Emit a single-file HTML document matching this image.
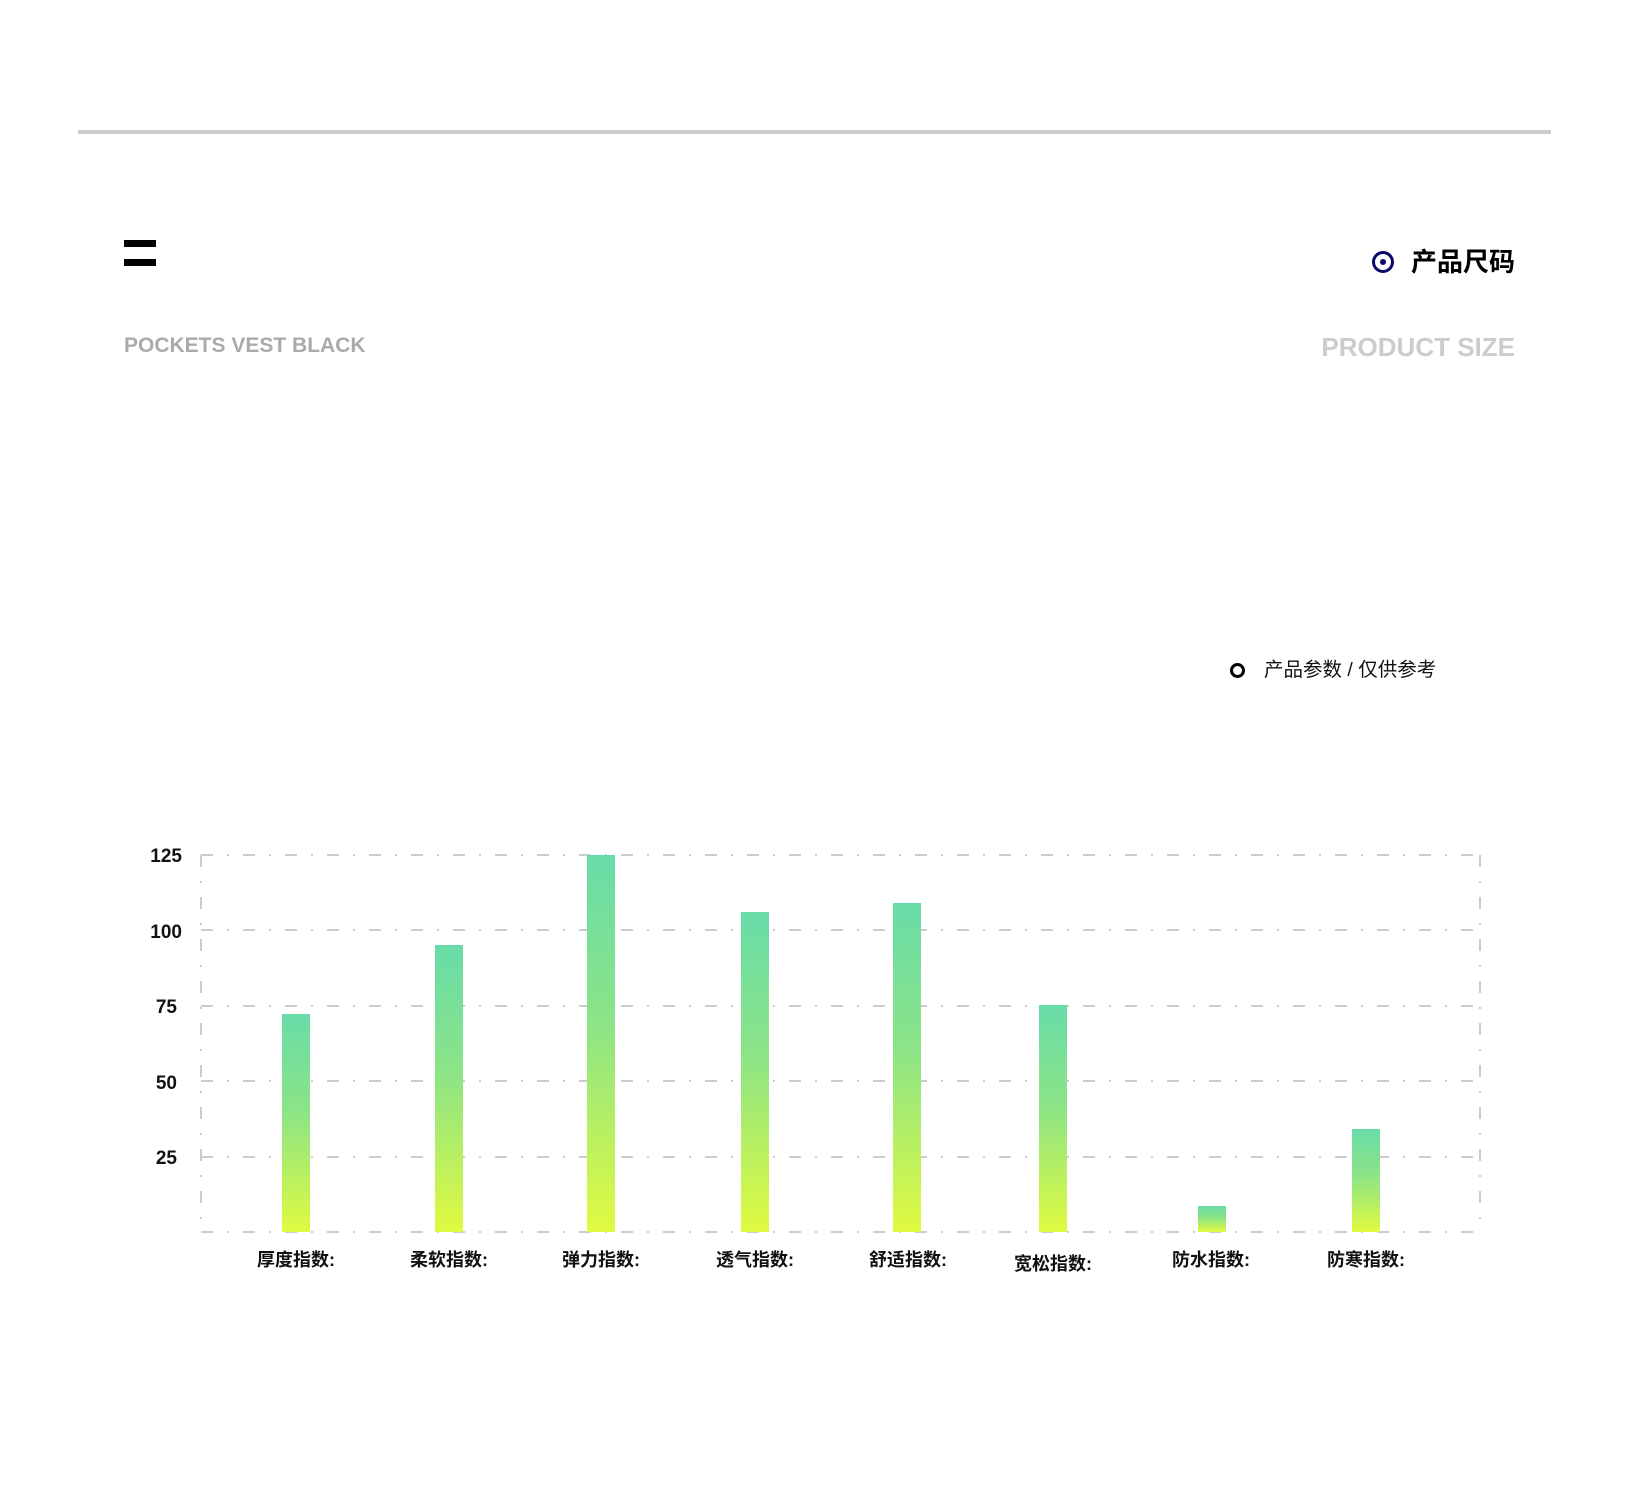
<!DOCTYPE html>
<html><head><meta charset="utf-8"><style>
body{margin:0;width:1629px;height:1500px;background:#fff;position:relative;overflow:hidden;font-family:"Liberation Sans","Noto Sans CJK SC",sans-serif}
.a{position:absolute}
</style></head><body>
<div class="a" style="left:78px;top:130px;width:1473px;height:4px;background:#ccc"></div>
<div class="a" style="left:124px;top:240px;width:32px;height:7px;background:#000"></div>
<div class="a" style="left:124px;top:259px;width:32px;height:7px;background:#000"></div>
<div class="a" style="left:1372px;top:251px;width:16px;height:16px;border:3px solid #0a0a6a;border-radius:50%"></div>
<div class="a" style="left:1380px;top:259px;width:6px;height:6px;background:#0a0a6a;border-radius:50%"></div>
<div class="a" style="right:114px;top:245px;font-size:26px;font-weight:bold;line-height:34px;color:#000">产品尺码</div>
<div class="a" style="left:124px;top:334px;font-size:21px;font-weight:bold;color:#aaa;line-height:24px">POCKETS VEST BLACK</div>
<div class="a" style="right:114px;top:332px;font-size:26px;font-weight:bold;color:#ccc;line-height:30px">PRODUCT SIZE</div>
<div class="a" style="left:1230px;top:663px;width:9px;height:9px;border:3px solid #000;border-radius:50%"></div>
<div class="a" style="left:1264px;top:658px;font-size:19.5px;line-height:24px;color:#111">产品参数 / 仅供参考</div>
<svg class="a" style="left:0;top:0" width="1629" height="1500">
<defs><linearGradient id="g" x1="0" y1="0" x2="0" y2="1"><stop offset="0" stop-color="#68dca8"/><stop offset="0.45" stop-color="#8ce486"/><stop offset="1" stop-color="#e0fa40"/></linearGradient></defs>
<g stroke="#ccc" stroke-width="2" stroke-dasharray="12 14 2 14">
<line x1="201" y1="855" x2="1480" y2="855"/><line x1="201" y1="930" x2="1480" y2="930"/><line x1="201" y1="1006" x2="1480" y2="1006"/><line x1="201" y1="1081" x2="1480" y2="1081"/><line x1="201" y1="1157" x2="1480" y2="1157"/><line x1="201" y1="1232" x2="1480" y2="1232"/>
<line x1="201" y1="855" x2="201" y2="1232"/><line x1="1480" y1="855" x2="1480" y2="1232"/>
</g>
<g font-family="Liberation Sans, sans-serif" font-weight="bold" font-size="19" text-anchor="end" fill="#111">
<text x="182" y="862">125</text><text x="182" y="938">100</text><text x="177" y="1013">75</text><text x="177" y="1089">50</text><text x="177" y="1164">25</text></g>
<g fill="url(#g)">
<rect x="282" y="1014" width="28" height="218"/>
<rect x="435" y="945" width="28" height="287"/>
<rect x="587" y="855" width="28" height="377"/>
<rect x="741" y="912" width="28" height="320"/>
<rect x="893" y="903" width="28" height="329"/>
<rect x="1039" y="1005" width="28" height="227"/>
<rect x="1198" y="1206" width="28" height="26"/>
<rect x="1352" y="1129" width="28" height="103"/>
</g>
<g font-family="Liberation Sans, Noto Sans CJK SC, sans-serif" font-weight="bold" font-size="18" text-anchor="middle" fill="#111">
<text x="296" y="1266">厚度指数:</text><text x="449" y="1266">柔软指数:</text><text x="601" y="1266">弹力指数:</text><text x="755" y="1266">透气指数:</text><text x="908" y="1266">舒适指数:</text><text x="1053" y="1270">宽松指数:</text><text x="1211" y="1266">防水指数:</text><text x="1366" y="1266">防寒指数:</text>
</g>
</svg>
</body></html>
